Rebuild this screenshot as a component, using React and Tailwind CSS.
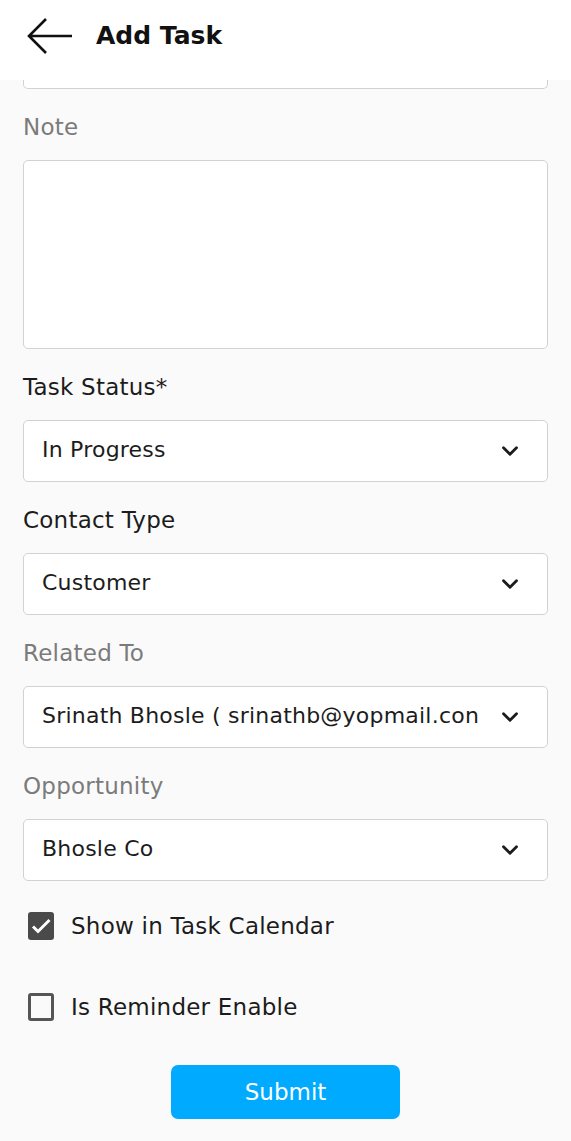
import React, { useState } from "react";
import { ChevronDown } from "lucide-react";

const font = { fontFamily: '"DejaVu Sans", "Noto Sans", sans-serif' };

const Label = ({ text, muted }) => (
  <div
    className={`pt-[22px] h-[71px] text-[23px] leading-[32px] tracking-[0.01em] ${
      muted ? "text-[#7b7b7b]" : "text-[#1c1c1c]"
    }`}
  >
    {text}
  </div>
);

const SelectBox = ({ value }) => (
  <div className="h-[62px] bg-white border border-[#d2d2d2] rounded-[5px] flex items-center pl-[18px] pr-[24px]">
    <div className="flex-1 overflow-hidden whitespace-nowrap text-[22px] tracking-[0.01em] text-[#1c1c1c] pb-[4px]">
      {value}
    </div>
    <ChevronDown size={26} strokeWidth={2.6} className="text-[#1c1c1c] shrink-0 ml-1" />
  </div>
);

const CheckRow = ({ label, checked, onToggle }) => (
  <div className="h-[30px] flex items-center gap-[17px] pl-[5px] cursor-pointer" onClick={onToggle}>
    {checked ? (
      <div className="w-[26px] h-[28px] rounded-[3px] bg-[#4a4a4a] flex items-center justify-center">
        <svg width="22" height="22" viewBox="0 0 22 22">
          <path d="M3 11.5l5 5L19.5 5" fill="none" stroke="white" strokeWidth="3" />
        </svg>
      </div>
    ) : (
      <div className="w-[26px] h-[28px] rounded-[3px] border-[3px] border-[#555]" />
    )}
    <span className="text-[23px] tracking-[0.01em] text-[#1c1c1c]">{label}</span>
  </div>
);

export default function App() {
  const [showCal, setShowCal] = useState(true);
  const [reminder, setReminder] = useState(false);

  return (
    <div className="w-[571px] h-[1141px] bg-[#fafafa] overflow-hidden" style={font}>
      <div className="h-[80px] bg-white flex items-center pl-[27px]">
        <svg width="46" height="38" viewBox="0 0 46 38" className="mb-[8px]">
          <path d="M45 19H2M19 2L2 19l17 17" fill="none" stroke="#111" strokeWidth="2.6" />
        </svg>
        <div className="ml-[23px] text-[25px] font-bold text-[#111] mb-[8px]">Add Task</div>
      </div>

      <div className="px-[23px]">
        <div className="h-[9px] bg-white border-x border-b border-[#d2d2d2] rounded-b-[5px]" />

        <Label text="Note" muted />
        <div className="h-[189px] bg-white border border-[#d2d2d2] rounded-[5px]" />

        <Label text="Task Status*" />
        <SelectBox value="In Progress" />

        <Label text="Contact Type" />
        <SelectBox value="Customer" />

        <Label text="Related To" muted />
        <SelectBox value="Srinath Bhosle ( srinathb@yopmail.con" />

        <Label text="Opportunity" muted />
        <SelectBox value="Bhosle Co" />

        <div className="pt-[30px]">
          <CheckRow label="Show in Task Calendar" checked={showCal} onToggle={() => setShowCal(!showCal)} />
        </div>
        <div className="pt-[51px]">
          <CheckRow label="Is Reminder Enable" checked={reminder} onToggle={() => setReminder(!reminder)} />
        </div>

        <div className="flex justify-center pt-[43px]">
          <button className="w-[229px] h-[54px] bg-[#00aaff] rounded-[7px] text-white text-[23px]">
            Submit
          </button>
        </div>
      </div>
    </div>
  );
}
